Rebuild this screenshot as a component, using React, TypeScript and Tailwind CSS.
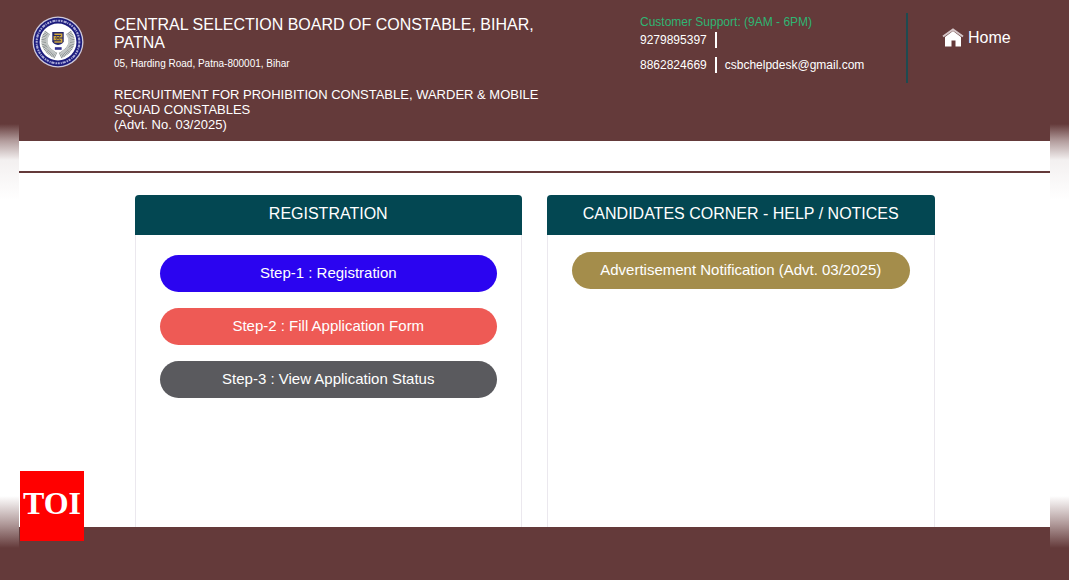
import { ReactNode } from "react";

interface PanelProps {
  title: string;
  children: ReactNode;
}

const steps = [
  { label: "Step-1 : Registration", color: "bg-[#2b04f0]" },
  { label: "Step-2 : Fill Application Form", color: "bg-[#ee5a55]" },
  { label: "Step-3 : View Application Status", color: "bg-[#5a5a5e]" },
];

function BoardLogo() {
  return (
    <svg viewBox="0 0 100 100" className="w-[52px] h-[52px]" role="img" aria-label="CSBC">
      <circle cx="50" cy="50" r="49" fill="#cfcadb" />
      <circle cx="50" cy="50" r="46.5" fill="#1b1b7c" />
      <circle cx="50" cy="50" r="41" fill="none" stroke="#a9a9d6" strokeWidth="4" strokeDasharray="3 2 6 1.5 2 2 4 1.5" />
      <circle cx="50" cy="50" r="35.5" fill="#fff" />
      {/* laurel */}
      <g fill="none" stroke="#8f9594">
        <path d="M30 32C18 47 24 66 46 76" strokeWidth="12" strokeDasharray="2 0.8" />
        <path d="M70 32C82 47 76 66 54 76" strokeWidth="12" strokeDasharray="2 0.8" />
        <path d="M33 34C23 49 29 64 46 73M67 34C77 49 71 64 54 73" stroke="#c4c8c7" strokeWidth="3" />
      </g>
      {/* shield */}
      <path d="M39 31H61V49Q59 54 50 56Q41 54 39 49Z" fill="#25276b" />
      <path d="M43 35H57V40H43V45H57V50H43" fill="none" stroke="#d0a63c" strokeWidth="3" />
      <path d="M46 38L54 47M54 38L46 47" stroke="#5b4a26" strokeWidth="1.5" />
      <rect x="44" y="60" width="13" height="5" fill="#30308f" />
    </svg>
  );
}

function HomeIcon() {
  return (
    <svg viewBox="0 0 22 20" className="w-[22px] h-5" aria-hidden="true">
      <path d="M3 9L11 3L19 9V18.5H13.5V12.5H9.5V18.5H3Z" fill="#fff" />
      <path d="M1 8.5L11 1.5L21 8.5" fill="none" stroke="#d5c6c8" strokeWidth="2" />
    </svg>
  );
}

function Panel({ title, children }: PanelProps) {
  return (
    <section className="flex-1 flex flex-col rounded-t border-x border-[#ebe8ee]">
      <h2 className="-mx-px h-10 pb-0.5 flex items-center justify-center rounded-t bg-[#034752] text-base text-white">
        {title}
      </h2>
      {children}
    </section>
  );
}

function PillButton({ label, color }: { label: string; color: string }) {
  return (
    <button type="button" className={`w-full h-[37px] rounded-full text-[15px] text-white ${color}`}>
      {label}
    </button>
  );
}

export default function App() {
  return (
    <div className="relative min-h-screen flex flex-col px-[19px] font-['Liberation_Sans',Arial,sans-serif] bg-[linear-gradient(to_bottom,#643a3a_0,#643a3a_124px,#b39d9d_141px,#f3f0f0_160px,#ffffff_200px,#ffffff_calc(100%_-_84px),#b39d9d_calc(100%_-_57px),#643a3a_calc(100%_-_32px))]">
      <header className="flex items-start bg-[#643a3a] pb-[9px] text-white">
        <div className="w-[95px] shrink-0 pl-[13px] pt-4">
          <BoardLogo />
        </div>
        <div className="w-[436px] pt-4">
          <h1 className="text-base leading-[18px]">
            CENTRAL SELECTION BOARD OF CONSTABLE, BIHAR, PATNA
          </h1>
          <p className="pt-1 text-[10px] leading-[15px]">05, Harding Road, Patna-800001, Bihar</p>
          <p className="pt-4 text-[13px] leading-[15px]">
            RECRUITMENT FOR PROHIBITION CONSTABLE, WARDER & MOBILE SQUAD CONSTABLES
            <br />
            (Advt. No. 03/2025)
          </p>
        </div>
        <div className="ml-auto w-[268px] mt-[13px] h-[70px] border-r-2 border-[#1f4a50] text-xs">
          <p className="h-[18px] leading-[18px] text-[#2fb573]">Customer Support: (9AM - 6PM)</p>
          <div className="h-[18px] flex items-center gap-2">
            <span>9279895397</span>
            <span className="w-0.5 h-4 bg-white" />
          </div>
          <div className="h-8 flex items-center gap-2">
            <span>8862824669</span>
            <span className="w-0.5 h-4 bg-white" />
            <a href="mailto:csbchelpdesk@gmail.com">csbchelpdesk@gmail.com</a>
          </div>
        </div>
        <a href="#" className="w-[142px] pl-[34px] pt-[26px] flex items-center gap-1 text-base leading-6">
          <HomeIcon />
          Home
        </a>
      </header>

      <div className="h-8 bg-white border-b-2 border-[#643a3a]" />

      <main className="flex-1 flex bg-white pt-[22px]">
        <div className="w-full max-w-[800px] mx-auto flex gap-[25px]">
          <Panel title="REGISTRATION">
            <div className="px-6 pt-5 flex flex-col gap-4">
              {steps.map((step) => (
                <PillButton key={step.label} label={step.label} color={step.color} />
              ))}
            </div>
          </Panel>
          <Panel title="CANDIDATES CORNER - HELP / NOTICES">
            <div className="px-6 pt-[17px]">
              <PillButton label="Advertisement Notification (Advt. 03/2025)" color="bg-[#a48d4b]" />
            </div>
          </Panel>
        </div>
      </main>

      <footer className="h-[53px] bg-[#643a3a]" />

      <div className="absolute left-5 bottom-[39px] w-16 h-[70px] flex items-center justify-center bg-[#ff0000] text-white font-bold text-[32px] leading-8 pb-1.5 font-['Liberation_Serif','Times_New_Roman',serif]">
        TOI
      </div>
    </div>
  );
}
